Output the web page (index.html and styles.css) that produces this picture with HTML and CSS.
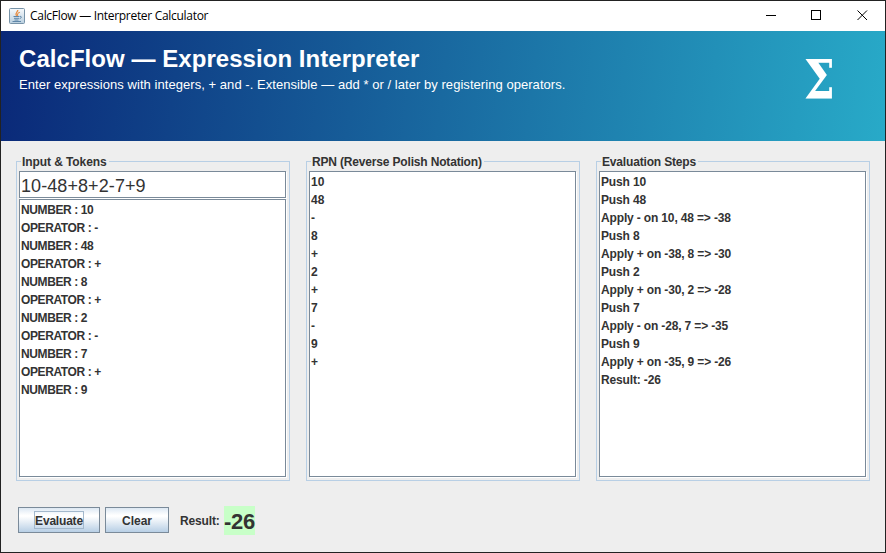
FILE: index.html
```html
<!DOCTYPE html>
<html lang="en">
<head>
<meta charset="utf-8">
<title>CalcFlow — Interpreter Calculator</title>
<link rel="stylesheet" href="styles.css">
</head>
<body>
<div class="window">
  <header class="titlebar">
    <svg class="app-icon" viewBox="0 0 16 16">
      <defs><linearGradient id="ib" x1="0" y1="0" x2="0" y2="1"><stop offset="0" stop-color="#f7fafc"/><stop offset="1" stop-color="#b9cfdf"/></linearGradient></defs>
      <rect x=".5" y=".5" width="15" height="15" rx="1" fill="url(#ib)" stroke="#7793a8"/>
      <path d="M8.800 2C9.200 4 5.500 4.500 7.500 8M10.800 4.200C8.200 5.200 8.200 6 8.700 7.800" fill="none" stroke="#e88a3c" stroke-width="1.200"/>
      <path d="M4.500 8.500H10.500M5 10.300H10M5.500 12H9.500M11 8.400C13.300 8.200 12.300 10.300 10.600 10.700M3.500 13.500H12" fill="none" stroke="#5f86a8" stroke-width="1"/>
    </svg>
    <span class="caption">CalcFlow — Interpreter Calculator</span>
    <svg class="controls" viewBox="0 0 108 14" shape-rendering="crispEdges">
      <path d="M0 6.500H10M45.500 1.500H54.500V10.500H45.500Z" fill="none" stroke="#000"/>
      <path d="M91.500 1.500L101 11M101 1.500L91.500 11" fill="none" stroke="#000" shape-rendering="auto"/>
    </svg>
  </header>
  <section class="banner">
    <div>
      <h1>CalcFlow — Expression Interpreter</h1>
      <p>Enter expressions with integers, + and -. Extensible — add * or / later by registering operators.</p>
    </div>
    <span class="sigma">Σ</span>
  </section>
  <main class="panels">
    <section class="panel">
      <h2 class="wide">Input &amp; Tokens</h2>
      <div class="field">10-48+8+2-7+9</div>
      <ul class="list tokens">
        <li>NUMBER : 10</li><li>OPERATOR : -</li><li>NUMBER : 48</li><li>OPERATOR : +</li><li>NUMBER : 8</li><li>OPERATOR : +</li><li>NUMBER : 2</li><li>OPERATOR : -</li><li>NUMBER : 7</li><li>OPERATOR : +</li><li>NUMBER : 9</li>
      </ul>
    </section>
    <section class="panel">
      <h2>RPN (Reverse Polish Notation)</h2>
      <ul class="list">
        <li>10</li><li>48</li><li>-</li><li>8</li><li>+</li><li>2</li><li>+</li><li>7</li><li>-</li><li>9</li><li>+</li>
      </ul>
    </section>
    <section class="panel">
      <h2>Evaluation Steps</h2>
      <ul class="list steps">
        <li>Push 10</li><li>Push 48</li><li>Apply - on 10, 48 =&gt; -38</li><li>Push 8</li><li>Apply + on -38, 8 =&gt; -30</li><li>Push 2</li><li>Apply + on -30, 2 =&gt; -28</li><li>Push 7</li><li>Apply - on -28, 7 =&gt; -35</li><li>Push 9</li><li>Apply + on -35, 9 =&gt; -26</li><li>Result: -26</li>
      </ul>
    </section>
  </main>
  <footer class="actions">
    <button class="evaluate"><span>Evaluate</span></button>
    <button class="clear">Clear</button>
    <span class="label">Result:</span>
    <output>-26</output>
  </footer>
</div>
</body>
</html>
```
FILE: styles.css
```css
* { box-sizing: border-box; margin: 0; padding: 0; }
body { font: bold 12px "Liberation Sans", Arial, sans-serif; color: #333; overflow: hidden; }
.window { width: 886px; height: 553px; border: 1px solid #222; background: #eee; display: flex; flex-direction: column; }
.titlebar { height: 30px; background: #fff; display: flex; align-items: center; padding: 0 18px 0 8px; }
.app-icon { width: 16px; height: 16px; }
.caption { margin: -1px 0 0 5px; font: 12px "Open Sans", sans-serif; letter-spacing: -.3px; color: #000; white-space: nowrap; }
.controls { width: 108px; height: 14px; margin-left: auto; margin-right: -7px; }
.banner { height: 110px; background: linear-gradient(97.1deg, #0a2878, #28aac8); color: #fff; display: flex; justify-content: space-between; padding: 14px 50px 0 18px; }
h1 { font-size: 24px; line-height: 28px; letter-spacing: .05px; white-space: nowrap; }
p { font-size: 13px; font-weight: normal; line-height: 16px; letter-spacing: .05px; margin-top: 4px; white-space: nowrap; }
.sigma { font: bold 55px/70px "DejaVu Serif", serif; transform: scaleX(.8); transform-origin: right; }
.panels { display: flex; gap: 16px; padding: 20px 15px 0; }
.panel { width: 274px; height: 320px; border: 1px solid #b8cfe5; padding: 0 2px 2px; display: flex; flex-direction: column; }
h2 { font-size: 12px; line-height: 16px; height: 16px; letter-spacing: -.17px; margin: -8px 0 1px 2px; padding: 0 2px 0 1px; background: #eee; align-self: flex-start; white-space: nowrap; }
.wide { letter-spacing: -.08px; }
.field, .list { border: 1px solid #7a8a99; background: #fff; box-shadow: 1px 1px #fff; margin-right: 1px; }
.field { height: 27px; font-size: 18px; font-weight: normal; line-height: 28px; letter-spacing: .08px; padding-left: 1px; margin-bottom: 1px; }
.list { flex: 1; list-style: none; padding: 1px 0 0 1px; margin-bottom: 1px; }
li { height: 18px; line-height: 18px; white-space: nowrap; }
.tokens { letter-spacing: -.4px; }
.steps { letter-spacing: -.15px; }
.actions { display: flex; padding: 26px 0 0 17px; align-items: flex-start; }
button { height: 26px; border: 1px solid #7a8a99; background: linear-gradient(#dde8f3 0%, #fff 30%, #fff 35%, #b8cfe5 100%); font: inherit; color: inherit; }
.evaluate { width: 82px; margin-right: 5px; }
.evaluate span { display: block; width: 50px; height: 18px; line-height: 18px; letter-spacing: -.2px; margin: 0 auto; border: 1px solid #a3b8cc; }
.clear { width: 64px; margin-right: 11px; padding-top: 1px; }
.label { line-height: 28px; letter-spacing: -.15px; width: 40px; margin-right: 4px; }
output { background: #c8ffc8; font-size: 22px; line-height: 31px; letter-spacing: -.3px; height: 29px; width: 31px; margin-top: -1px; }
```
